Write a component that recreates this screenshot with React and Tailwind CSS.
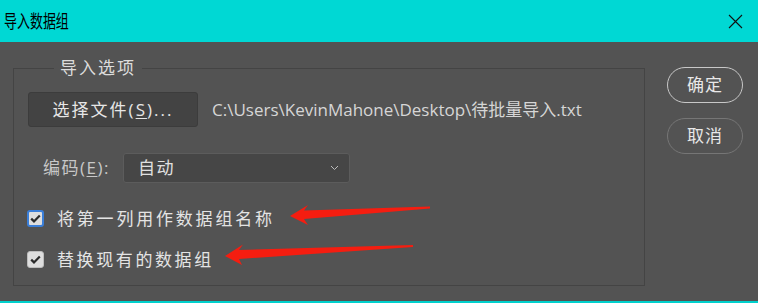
import React from 'react';

const font = "font-['Segoe_UI','Open_Sans','Noto_Sans_CJK_SC',sans-serif]";

function Check({ focused }) {
    return (
        <span
            className={`flex items-center justify-center w-[17px] h-[17px] rounded-[3px] bg-[#dedede] ${
                focused ? 'border-2 border-[#3b7fd9]' : 'border border-[#bdbdbd]'
            }`}
        >
            <svg width="11" height="9" viewBox="0 0 11 9">
                <path d="M1.2 4.6 L4 7.4 L9.8 1.4" fill="none" stroke="#2b2b2b" strokeWidth="2.2" />
            </svg>
        </span>
    );
}

function Arrows() {
    // red annotation arrows drawn over the dialog
    return (
        <svg className="absolute left-0 top-0 pointer-events-none" width="758" height="261" viewBox="0 42 758 261">
            <polygon
                points="290,216 308,205 304,210.5 430,206.5 430,208.5 304,219 308,225"
                fill="#f51d10"
            />
            <polygon
                points="225,256 243,244.5 239,250 413,245 413,247 239,259 242,265"
                fill="#f51d10"
            />
        </svg>
    );
}

export default function App() {
    return (
        <div className={`w-[758px] h-[303px] bg-[#535353] overflow-hidden ${font}`}>
            {/* Title bar */}
            <div className="h-[42px] bg-[#00d8d4] flex items-center justify-between pl-[4px] pr-[15px]">
                <span className="text-[18px] text-black origin-left scale-x-[0.72] leading-none">
                    导入数据组
                </span>
                <svg width="15" height="15" viewBox="0 0 15 15">
                    <path d="M1 1 L14 14 M14 1 L1 14" stroke="#111" strokeWidth="1.1" />
                </svg>
            </div>

            {/* Body */}
            <div className="relative h-[259px] flex">
                <fieldset className="ml-[13px] mt-[15px] w-[632px] h-[229px] border border-[#444444] px-[14px]">
                    <legend className="ml-[26px] px-[6px] text-[17px] tracking-[2px] leading-[22px] text-[#dcdcdc]">
                        导入选项
                    </legend>

                    <div className="mt-[13px] flex items-center gap-[14px]">
                        <button className="w-[170px] h-[35px] rounded-[3px] bg-[#434343] border border-[#3c3c3c] text-[#e6e6e6] text-[17px] tracking-[2px] flex items-center justify-center">
                            选择文件(<span className="underline underline-offset-2">S</span>)...
                        </button>
                        <span className="text-[17px] text-[#d6d6d6]">
                            C:\Users\KevinMahone\Desktop\待批量导入.txt
                        </span>
                    </div>

                    <div className="mt-[26px] flex items-center">
                        <span className="ml-[15px] w-[80px] text-[17px] tracking-[1.5px] text-[#c8c8c8]">
                            编码(<span className="underline underline-offset-2">E</span>):
                        </span>
                        <div className="w-[227px] h-[30px] rounded-[3px] bg-[#464646] border border-[#5c5c5c] flex items-center justify-between pl-[14px] pr-[10px]">
                            <span className="text-[17px] tracking-[1.5px] text-[#e0e0e0]">自动</span>
                            <svg width="9" height="6" viewBox="0 0 9 6">
                                <path d="M1 1 L4.5 4.5 L8 1" fill="none" stroke="#bdbdbd" strokeWidth="1" />
                            </svg>
                        </div>
                    </div>

                    <div className="mt-[27px] flex flex-col gap-[24px] ml-[-1px]">
                        <label className="flex items-center gap-[13px] h-[17px]">
                            <Check focused />
                            <span className="text-[17px] tracking-[2.8px] text-[#e4e4e4]">
                                将第一列用作数据组名称
                            </span>
                        </label>
                        <label className="flex items-center gap-[13px] h-[17px]">
                            <Check />
                            <span className="text-[17px] tracking-[2.6px] text-[#e4e4e4]">
                                替换现有的数据组
                            </span>
                        </label>
                    </div>
                </fieldset>

                <div className="ml-[22px] mt-[25px] flex flex-col gap-[15px]">
                    <button className="w-[76px] h-[36px] rounded-full border-[1.5px] border-[#c8c8c8] text-[17px] tracking-[1px] text-[#e8e8e8]">
                        确定
                    </button>
                    <button className="w-[76px] h-[36px] rounded-full border border-[#767676] text-[17px] tracking-[1px] text-[#e8e8e8]">
                        取消
                    </button>
                </div>

                <Arrows />
            </div>
            <div className="h-[2px] bg-[#00d0cc]" />
        </div>
    );
}
